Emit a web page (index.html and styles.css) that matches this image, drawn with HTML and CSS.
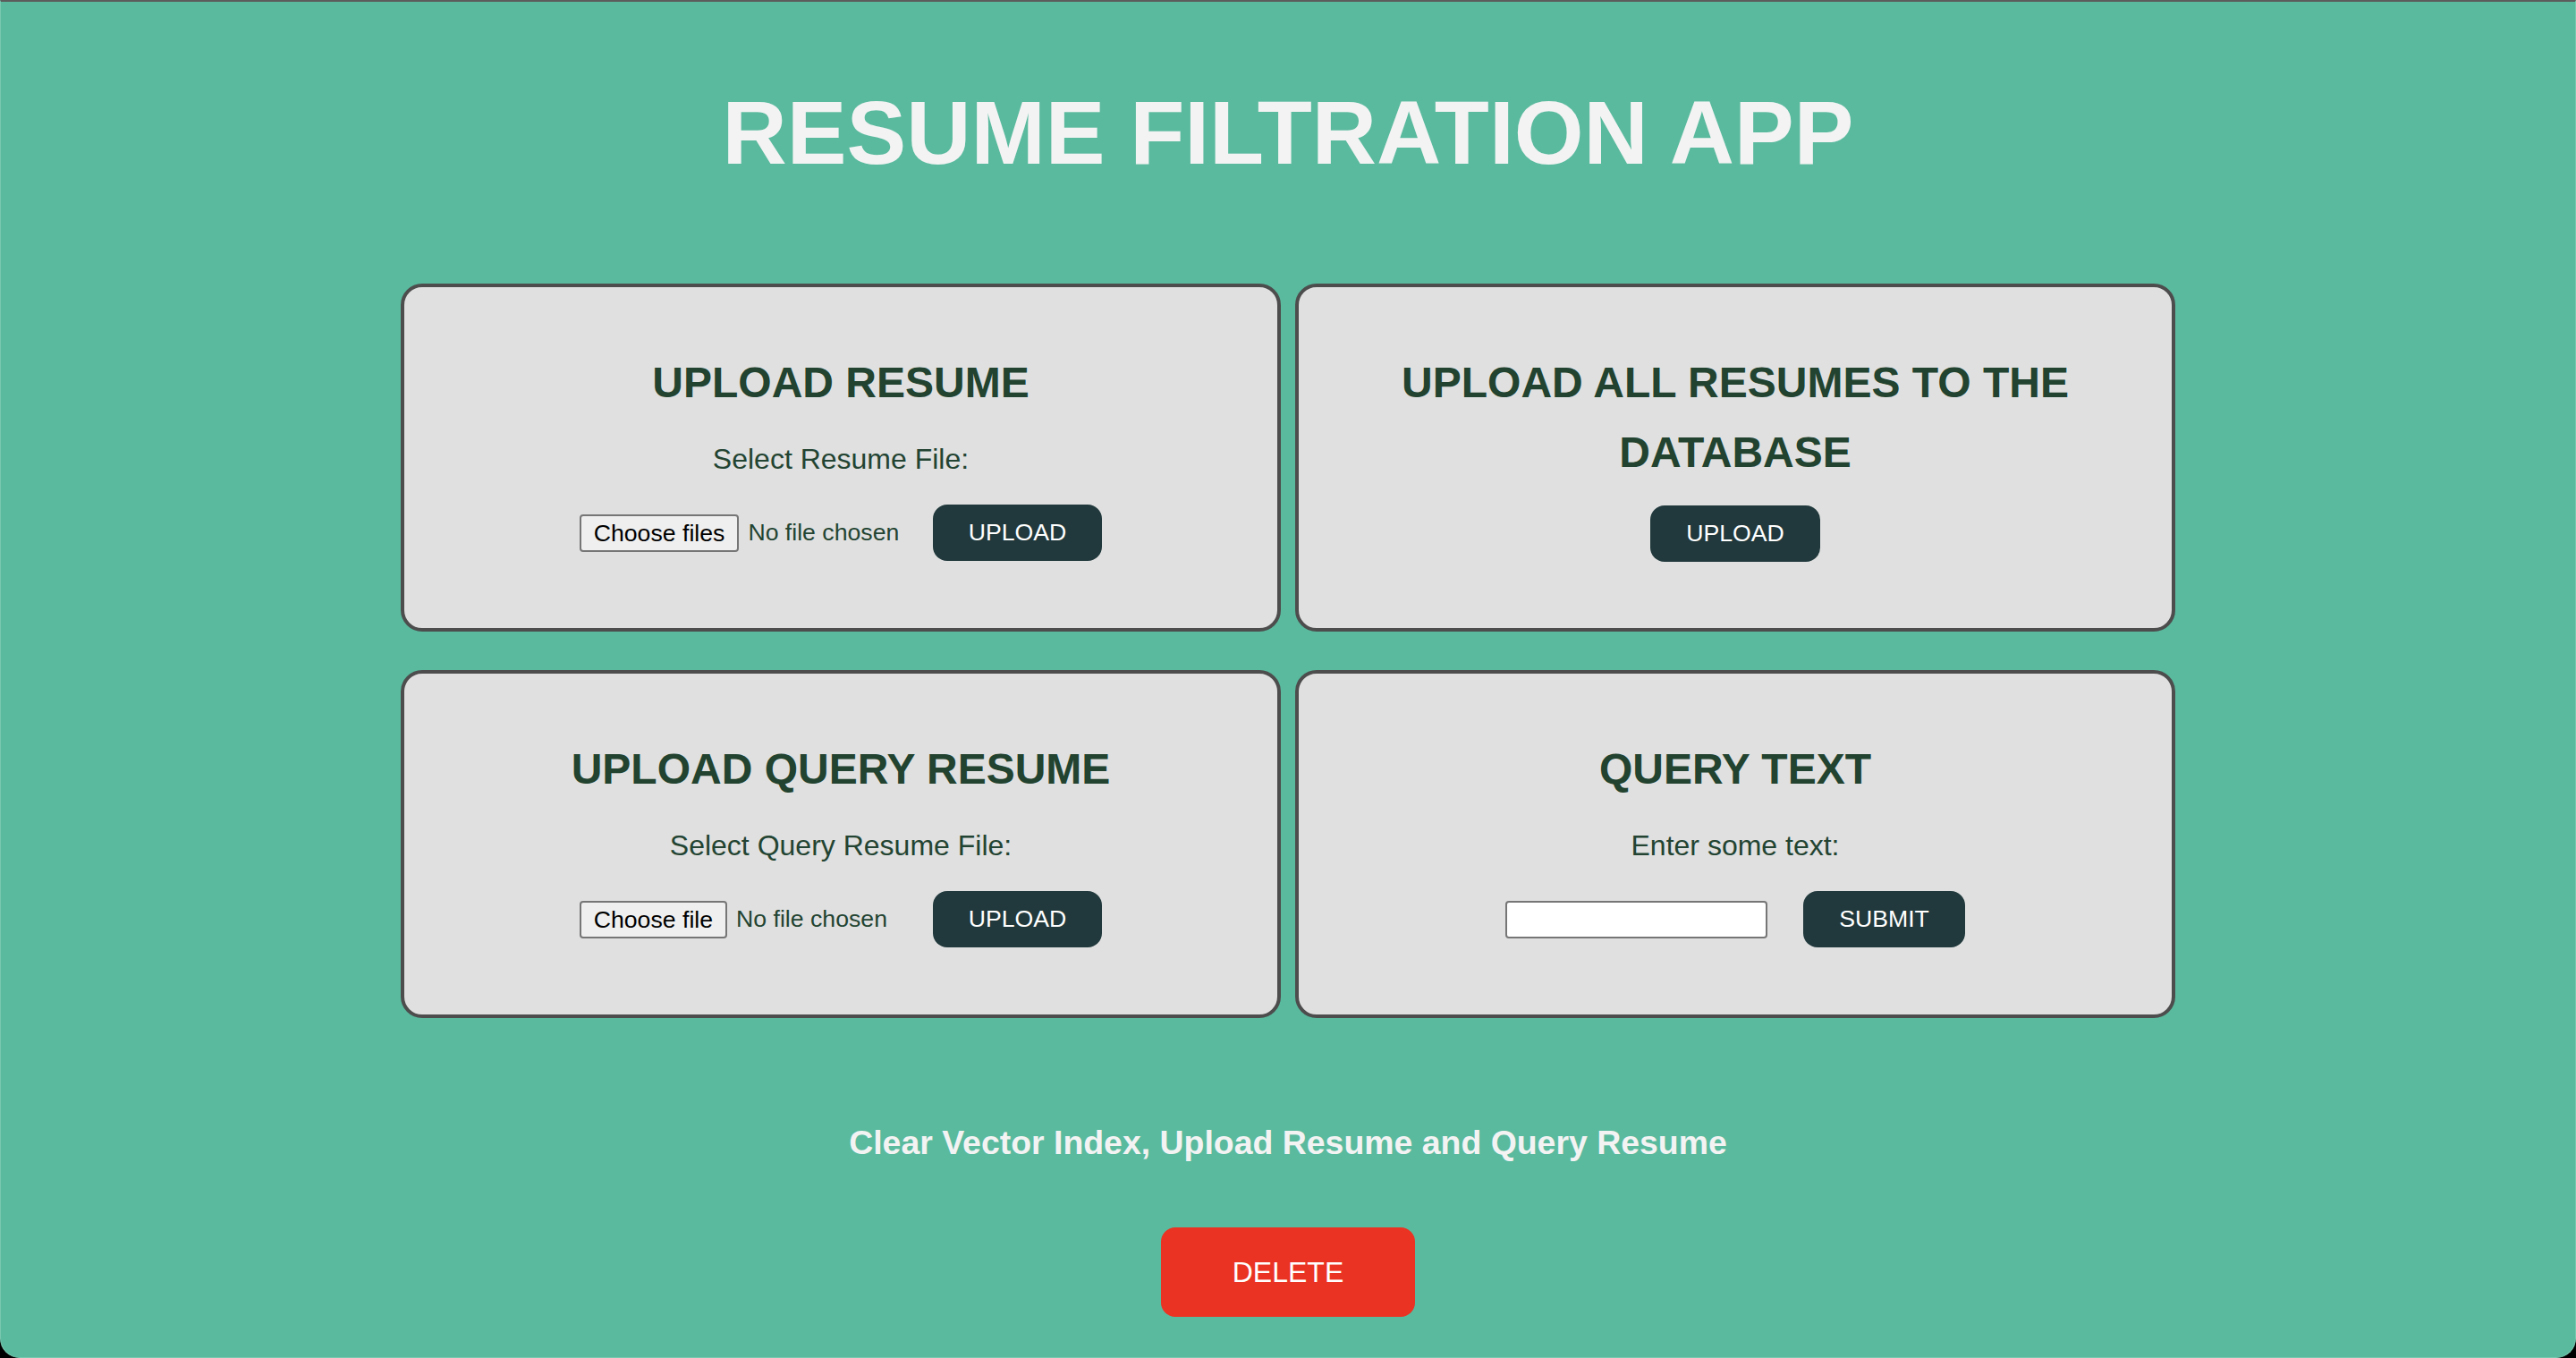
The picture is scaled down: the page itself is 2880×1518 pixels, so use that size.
FILE: index.html
```html
<!DOCTYPE html>
<html lang="en">
<head>
<meta charset="utf-8">
<title>Resume Filtration App</title>
<link rel="stylesheet" href="styles.css">
</head>
<body>
<div class="window">
  <h1 class="title">RESUME FILTRATION APP</h1>
  <div class="grid">
    <section class="card">
      <h2 class="card-title">UPLOAD RESUME</h2>
      <p class="label">Select Resume File:</p>
      <div class="row">
        <label class="file">
          <input class="file-native" type="file" multiple>
          <span class="file-btn">Choose files</span>
          <span class="file-status">No file chosen</span>
        </label>
        <button class="btn">UPLOAD</button>
      </div>
    </section>
    <section class="card">
      <h2 class="card-title">UPLOAD ALL RESUMES TO THE DATABASE</h2>
      <div class="row">
        <button class="btn">UPLOAD</button>
      </div>
    </section>
    <section class="card">
      <h2 class="card-title">UPLOAD QUERY RESUME</h2>
      <p class="label">Select Query Resume File:</p>
      <div class="row">
        <label class="file">
          <input class="file-native" type="file">
          <span class="file-btn">Choose file</span>
          <span class="file-status">No file chosen</span>
        </label>
        <button class="btn">UPLOAD</button>
      </div>
    </section>
    <section class="card">
      <h2 class="card-title">QUERY TEXT</h2>
      <p class="label">Enter some text:</p>
      <div class="row">
        <input class="text" type="text">
        <button class="btn">SUBMIT</button>
      </div>
    </section>
  </div>
  <h3 class="clear-title">Clear Vector Index, Upload Resume and Query Resume</h3>
  <button class="btn-delete">DELETE</button>
</div>
</body>
</html>
```

FILE: styles.css
```css
html, body {
  margin: 0;
  padding: 0;
  background: #000;
}

body {
  font-family: "Liberation Sans", Arial, sans-serif;
}

.window {
  box-sizing: border-box;
  height: 1518px;
  background: #5aba9e;
  border-top: 2px solid #5c5c5c;
  border-left: 1px solid #78c8af;
  border-right: 1px solid #78c8af;
  border-bottom: 1px solid #78c8af;
  border-radius: 0 0 22px 22px;
  display: flex;
  flex-direction: column;
  align-items: center;
  padding-top: 90px;
}

.title {
  margin: 0 0 113px;
  font-size: 100px;
  line-height: 112px;
  font-weight: 700;
  color: #f3f3f3;
}

.grid {
  display: grid;
  grid-template-columns: 984px 984px;
  column-gap: 16px;
  row-gap: 43px;
}

.card {
  box-sizing: border-box;
  min-height: 389px;
  background: #e0e0e0;
  border: 4px solid #4d4d4d;
  border-radius: 24px;
  padding: 68px 40px 72px;
  text-align: center;
}

.card-title {
  margin: 0 0 20px;
  font-size: 48px;
  line-height: 78px;
  font-weight: 700;
  color: #22432f;
}

.label {
  margin: 0 0 25px;
  font-size: 32px;
  line-height: 52px;
  color: #234432;
}

.row {
  display: flex;
  justify-content: center;
  align-items: center;
  gap: 40px;
}

.btn {
  font-family: "Liberation Sans", Arial, sans-serif;
  font-size: 26.67px;
  line-height: 31px;
  padding: 16px 40px;
  border: none;
  border-radius: 16px;
  background: #21393c;
  color: #fff;
}

.file {
  width: 355px;
  display: flex;
  align-items: center;
  font-size: 26.67px;
  line-height: 31px;
  color: #234432;
  text-align: left;
}

.file-native {
  display: none;
}

.file-btn {
  box-sizing: border-box;
  height: 42px;
  padding: 4px 14px;
  margin-right: 10px;
  border: 2px solid #767676;
  border-radius: 4px;
  background: #efefef;
  color: #000;
  white-space: nowrap;
}

.file-status {
  white-space: nowrap;
}

.text {
  box-sizing: border-box;
  width: 293px;
  height: 42px;
  border: 2px solid #767676;
  border-radius: 4px;
  background: #fff;
  font-family: "Liberation Sans", Arial, sans-serif;
  font-size: 26.67px;
  padding: 2px 6px;
}

.clear-title {
  margin: 117px 0 73px;
  font-size: 37.44px;
  line-height: 44px;
  font-weight: 700;
  color: #f3f3f3;
}

.btn-delete {
  font-family: "Liberation Sans", Arial, sans-serif;
  font-size: 32px;
  line-height: 36px;
  padding: 32px 80px;
  border: none;
  border-radius: 16px;
  background: #ea3323;
  color: #fff;
}
```
